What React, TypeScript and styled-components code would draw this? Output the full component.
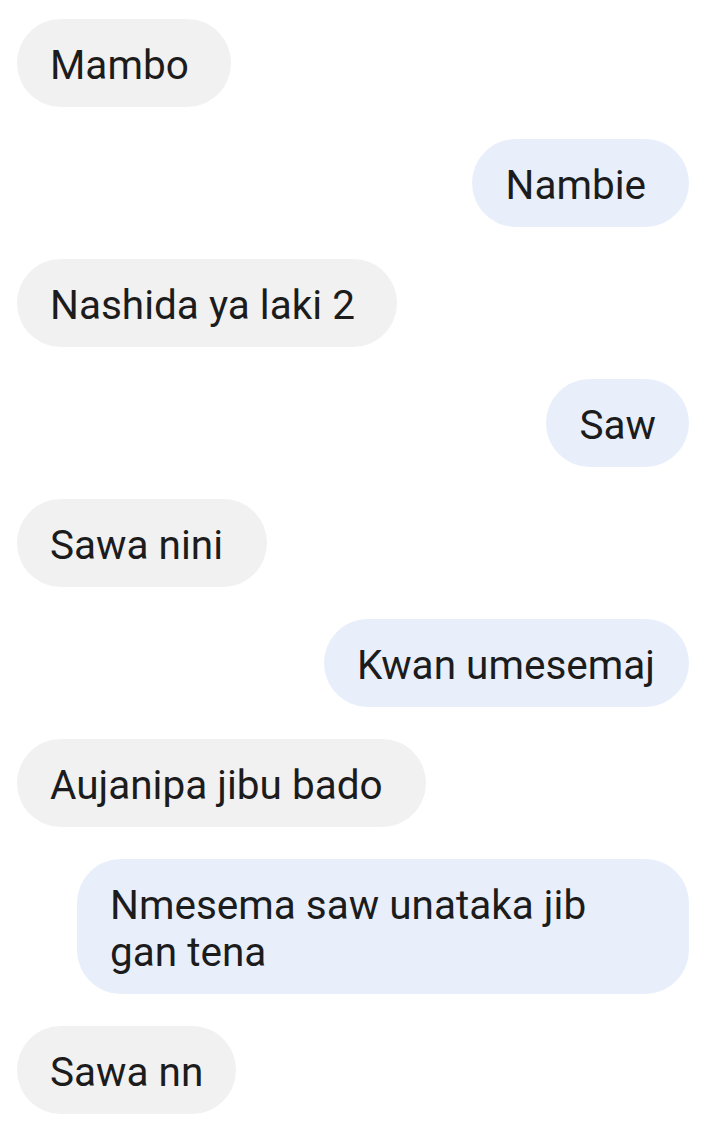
import styled, { createGlobalStyle } from "styled-components";

const GlobalStyle = createGlobalStyle`
    html, body {
        margin: 0;
        padding: 0;
        background: #ffffff;
    }

    body {
        font-family: Roboto, "Noto Sans", sans-serif;
    }
`;

const Thread = styled.div`
    display: flex;
    flex-direction: column;
    gap: 32px;
    padding: 19px 23px 24px 17px;
    background-color: #ffffff;
`;

const Bubble = styled.div<{ $out?: boolean; $trail: number }>`
    align-self: ${(p) => (p.$out ? "flex-end" : "flex-start")};
    max-width: 612px;
    box-sizing: border-box;
    padding: 23px ${(p) => p.$trail}px 18px 33px;
    border-radius: 44px;
    background-color: ${(p) => (p.$out ? "#e8effb" : "#f1f1f1")};
    color: #1c1c1c;
    font-size: 40.5px;
    line-height: 47px;
`;

// trail = right padding, the app's bubbles don't all end the same distance after the text
const messages = [
    { text: "Mambo", out: false, trail: 42 },
    { text: "Nambie", out: true, trail: 43 },
    { text: "Nashida ya laki 2", out: false, trail: 42 },
    { text: "Saw", out: true, trail: 33 },
    { text: "Sawa nini", out: false, trail: 44 },
    { text: "Kwan umesemaj", out: true, trail: 34 },
    { text: "Aujanipa jibu bado", out: false, trail: 43 },
    { text: "Nmesema saw unataka jib gan tena", out: true, trail: 40 },
    { text: "Sawa nn", out: false, trail: 33 },
];

export default function App() {
    return (
        <>
            <GlobalStyle />
            <Thread>
                {messages.map((m, i) => (
                    <Bubble key={i} $out={m.out} $trail={m.trail}>
                        {m.text}
                    </Bubble>
                ))}
            </Thread>
        </>
    );
}
